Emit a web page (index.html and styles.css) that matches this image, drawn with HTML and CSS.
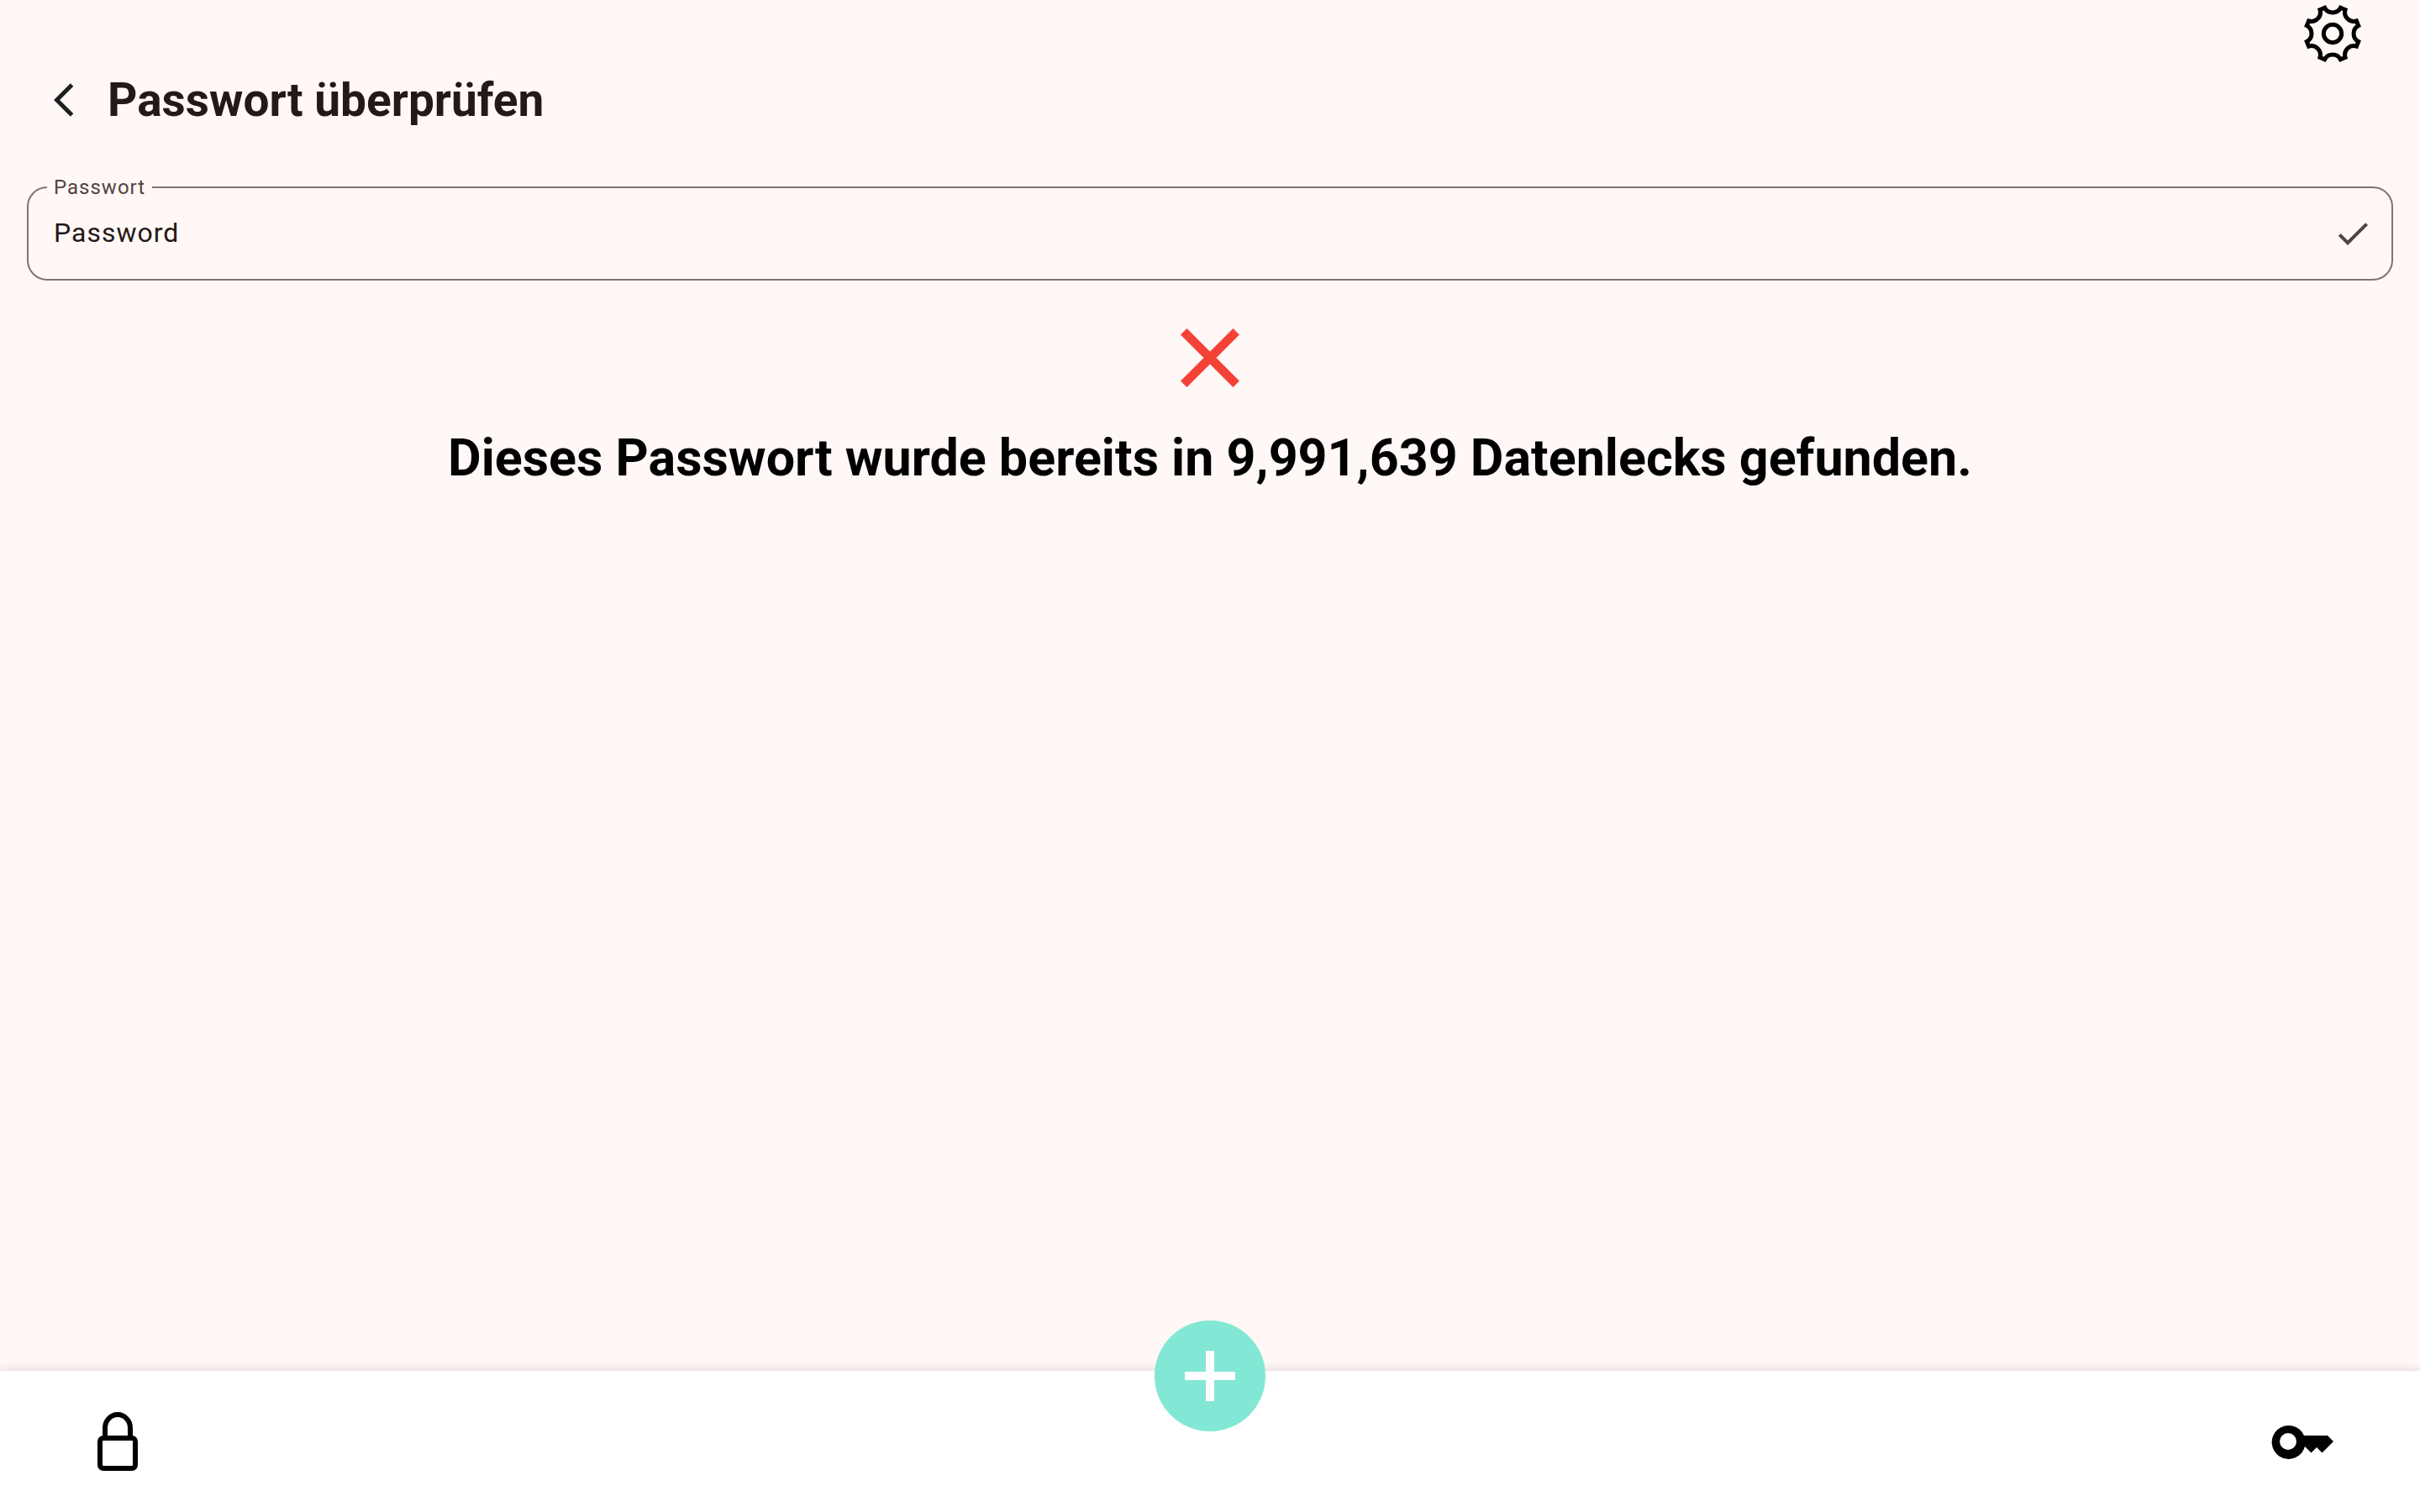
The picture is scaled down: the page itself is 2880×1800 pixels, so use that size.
FILE: index.html
```html
<!DOCTYPE html>
<html lang="de">
<head>
<meta charset="utf-8">
<meta name="viewport" content="width=device-width, initial-scale=1">
<title>Passwort überprüfen</title>
<link rel="stylesheet" href="styles.css">
</head>
<body>
<div class="app">
  <div class="toolbar">
    <button class="icon-button" type="button" aria-label="Einstellungen">
      <svg class="icon-settings" viewBox="-120 -120 240 240" aria-hidden="true">
        <path d="M-28.3-92.2A32 32 0 0 0 28.3-92.2L45.2-85.2A32 32 0 0 0 85.2-45.2L92.2-28.3A32 32 0 0 0 92.2 28.3L85.2 45.2A32 32 0 0 0 45.2 85.2L28.3 92.2A32 32 0 0 0-28.3 92.2L-45.2 85.2A32 32 0 0 0-85.2 45.2L-92.2 28.3A32 32 0 0 0-92.2-28.3L-85.2-45.2A32 32 0 0 0-45.2-85.2Z"/>
        <circle r="32"/>
      </svg>
    </button>
  </div>
  <header class="header">
    <button class="icon-button" type="button" aria-label="Zurück">
      <svg class="icon-back" viewBox="0 0 24 24" aria-hidden="true"><path d="M11.67 3.87 9.9 2.1 0 12l9.9 9.9 1.77-1.77L3.54 12z"/></svg>
    </button>
    <h1 class="title">Passwort überprüfen</h1>
  </header>
  <main class="content">
    <fieldset class="field">
      <legend class="field-legend"><label for="password">Passwort</label></legend>
      <div class="field-row">
        <input class="field-input" id="password" type="text" value="Password" autocomplete="off">
        <button class="icon-button" type="button" aria-label="Prüfen">
          <svg class="icon-check" viewBox="0 0 24 24" aria-hidden="true"><path d="M9 16.17 4.83 12l-1.42 1.41L9 19 21 7l-1.41-1.41z"/></svg>
        </button>
      </div>
    </fieldset>
    <section class="result">
      <svg class="icon-close" viewBox="0 0 24 24" aria-hidden="true"><path d="M19 6.500 17.500 5 12 10.500 6.500 5 5 6.500 10.500 12 5 17.500 6.500 19 12 13.500 17.500 19 19 17.500 13.500 12z"/></svg>
      <p class="message">Dieses Passwort wurde bereits in 9,991,639 Datenlecks gefunden.</p>
    </section>
  </main>
  <nav class="bottom-bar">
    <button class="icon-button" type="button" aria-label="Passwörter">
      <svg class="icon-lock" viewBox="0 0 48 70" aria-hidden="true"><rect x="3" y="31" width="42" height="36" rx="4"/><path d="M9 30V19a15 16 0 0 1 30 0V30"/></svg>
    </button>
    <button class="fab" type="button" aria-label="Hinzufügen">
      <svg class="icon-add" viewBox="0 0 60 60" aria-hidden="true"><path d="M25 0h10v25h25v10H35v25H25V35H0V25h25z"/></svg>
    </button>
    <button class="icon-button" type="button" aria-label="Schlüssel">
      <svg class="icon-key" viewBox="0 0 74 42" aria-hidden="true"><path fill-rule="evenodd" d="M39 14H67L74 21 60.500 34.500 54 28 47.500 34.500 40 27A20 20 0 1 1 39 14ZM20 11a10 10 0 1 0 0 20 10 10 0 0 0 0-20Z"/></svg>
    </button>
  </nav>
</div>
</body>
</html>
```
FILE: styles.css
```css
* {
  box-sizing: border-box;
}

body {
  margin: 0;
  background: #fff8f6;
  color: #231917;
  font-family: Roboto, "Noto Sans", sans-serif;
}

.app {
  display: flex;
  flex-direction: column;
  min-height: 100vh;
}

.icon-button {
  display: flex;
  padding: 0;
  border: 0;
  background: none;
  color: inherit;
  cursor: pointer;
}

svg {
  display: block;
  fill: currentColor;
}

.toolbar {
  display: flex;
  justify-content: flex-end;
  padding: 0 64px;
  color: #000;
}

.icon-settings {
  width: 80px;
  height: 80px;
  fill: none;
  stroke: currentColor;
  stroke-width: 15px;
}

.header {
  display: flex;
  align-items: center;
  gap: 16px;
  padding: 6px 64px;
}

.icon-back,
.icon-check {
  width: 48px;
  height: 48px;
}

.icon-back {
  color: #1d1f20;
}

.title {
  margin: 0;
  font-size: 55px;
  font-weight: 700;
  line-height: 66px;
}

.content {
  flex: 1;
  padding: 52px 32px;
}

.field {
  min-width: 0;
  margin: 0;
  padding: 0 22px;
  border: 2px solid #857370;
  border-radius: 24px;
}

.field-legend {
  padding: 0 8px;
  color: #534341;
  font-size: 24px;
  line-height: 26px;
  letter-spacing: 1px;
}

.field-row {
  display: flex;
  align-items: center;
  padding: 18px 0 30px 8px;
}

.field-input {
  flex: 1;
  min-width: 0;
  height: 48px;
  padding: 0 0 2px;
  border: 0;
  outline: 0;
  background: none;
  color: #231917;
  font: 400 32px/38px Roboto, "Noto Sans", sans-serif;
  letter-spacing: 1px;
}

.icon-check {
  color: #534341;
}

.result {
  display: flex;
  flex-direction: column;
  align-items: center;
  gap: 24px;
  padding-top: 32px;
}

.icon-close {
  width: 120px;
  height: 120px;
  color: #f44336;
}

.message {
  margin: 0;
  color: #000;
  font-size: 61px;
  font-weight: 700;
  line-height: 70px;
  text-align: center;
}

.bottom-bar {
  display: flex;
  justify-content: space-between;
  align-items: center;
  padding: 49px 103px 49px 116px;
  position: relative;
  background: #fff;
  box-shadow: 0 0 12px rgb(0 0 0 / 16%);
  color: #000;
}

.icon-lock {
  width: 48px;
  height: 70px;
  fill: none;
  stroke: currentColor;
  stroke-width: 6px;
}

.icon-key {
  width: 74px;
  height: 42px;
}

/* The add button straddles the top edge of the bar. */
.fab {
  position: absolute;
  top: -60px;
  left: 50%;
  display: grid;
  place-items: center;
  width: 132px;
  height: 132px;
  margin-left: -66px;
  padding: 0;
  border: 0;
  border-radius: 50%;
  background: #82e7d4;
  color: #fff;
  cursor: pointer;
}

.icon-add {
  width: 60px;
  height: 60px;
}
```
